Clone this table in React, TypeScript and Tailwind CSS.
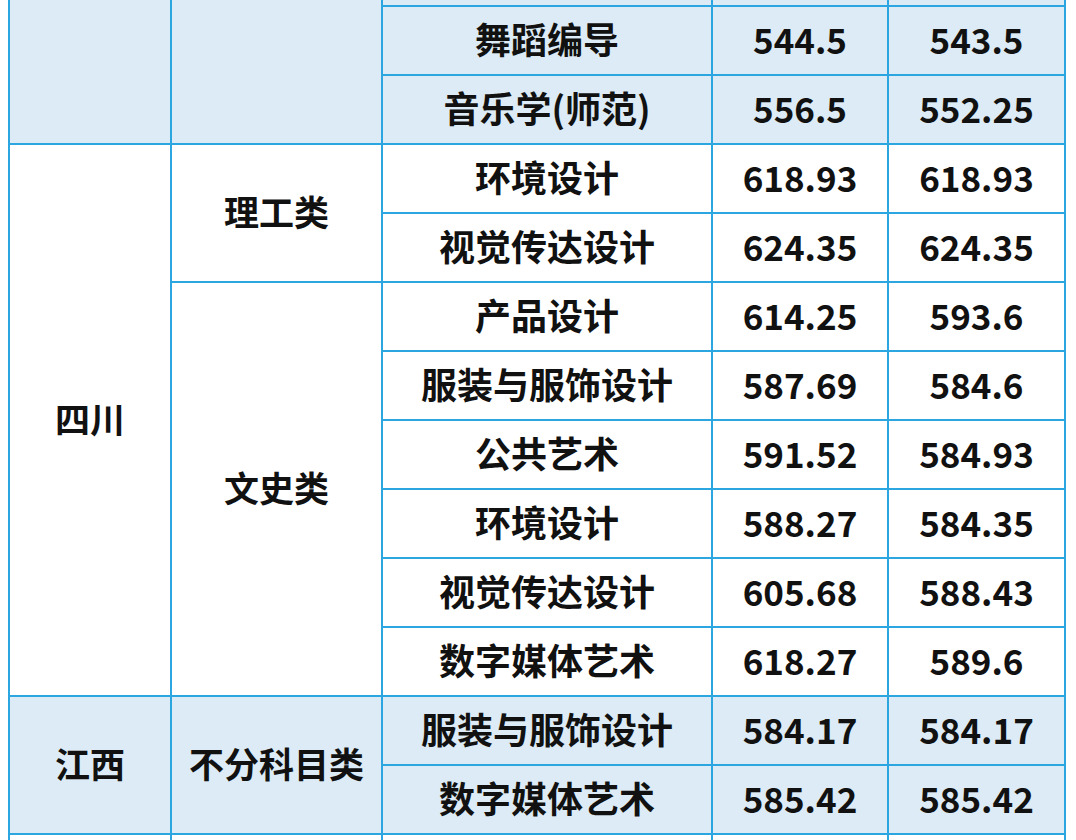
const FONT = "font-['Noto_Sans_CJK_SC','Noto_Sans',sans-serif]";

type Row = { major: string; a: string; b: string; blue: boolean };

const rows: Row[] = [
  { major: "", a: "", b: "", blue: true },
  { major: "舞蹈编导", a: "544.5", b: "543.5", blue: true },
  { major: "音乐学(师范)", a: "556.5", b: "552.25", blue: true },
  { major: "环境设计", a: "618.93", b: "618.93", blue: false },
  { major: "视觉传达设计", a: "624.35", b: "624.35", blue: false },
  { major: "产品设计", a: "614.25", b: "593.6", blue: false },
  { major: "服装与服饰设计", a: "587.69", b: "584.6", blue: false },
  { major: "公共艺术", a: "591.52", b: "584.93", blue: false },
  { major: "环境设计", a: "588.27", b: "584.35", blue: false },
  { major: "视觉传达设计", a: "605.68", b: "588.43", blue: false },
  { major: "数字媒体艺术", a: "618.27", b: "589.6", blue: false },
  { major: "服装与服饰设计", a: "584.17", b: "584.17", blue: true },
  { major: "数字媒体艺术", a: "585.42", b: "585.42", blue: true },
  { major: "", a: "", b: "", blue: false },
];

function Cell({ children, blue, className = "" }: { children?: React.ReactNode; blue: boolean; className?: string }) {
  return (
    <div
      className={`flex items-center justify-center pb-[5px] font-bold leading-none text-[#111] ${
        blue ? "bg-[#dcebf5]" : "bg-white"
      } ${className}`}
    >
      {children}
    </div>
  );
}

export default function App() {
  return (
    <div className={`h-[840px] w-[1076px] overflow-hidden bg-white ${FONT}`}>
      <div className="-mt-[64px] ml-[8px] grid w-[1058px] grid-cols-[160px_209px_328px_174px_175px] auto-rows-[67px] gap-[2px] bg-[#2ba6e0] p-[2px]">
        {rows.map((r, i) => (
          <Row key={i} r={r} i={i} />
        ))}
      </div>
    </div>
  );
}

function Row({ r, i }: { r: Row; i: number }) {
  return (
    <>
      {i === 0 && (
        <>
          <Cell blue className="row-span-3" />
          <Cell blue className="row-span-3" />
        </>
      )}
      {i === 3 && (
        <>
          <Cell blue={false} className="row-span-8 text-[35px]">四川</Cell>
          <Cell blue={false} className="row-span-2 text-[35px]">理工类</Cell>
        </>
      )}
      {i === 5 && <Cell blue={false} className="col-start-2 row-span-6 text-[35px]">文史类</Cell>}
      {i === 11 && (
        <>
          <Cell blue className="row-span-2 text-[35px]">江西</Cell>
          <Cell blue className="row-span-2 text-[35px]">不分科目类</Cell>
        </>
      )}
      {i === 13 && (
        <>
          <Cell blue={false} />
          <Cell blue={false} />
        </>
      )}
      <Cell blue={r.blue} className="col-start-3 text-[36px]">{r.major}</Cell>
      <Cell blue={r.blue} className="text-[35px]">{r.a}</Cell>
      <Cell blue={r.blue} className="text-[35px]">{r.b}</Cell>
    </>
  );
}
